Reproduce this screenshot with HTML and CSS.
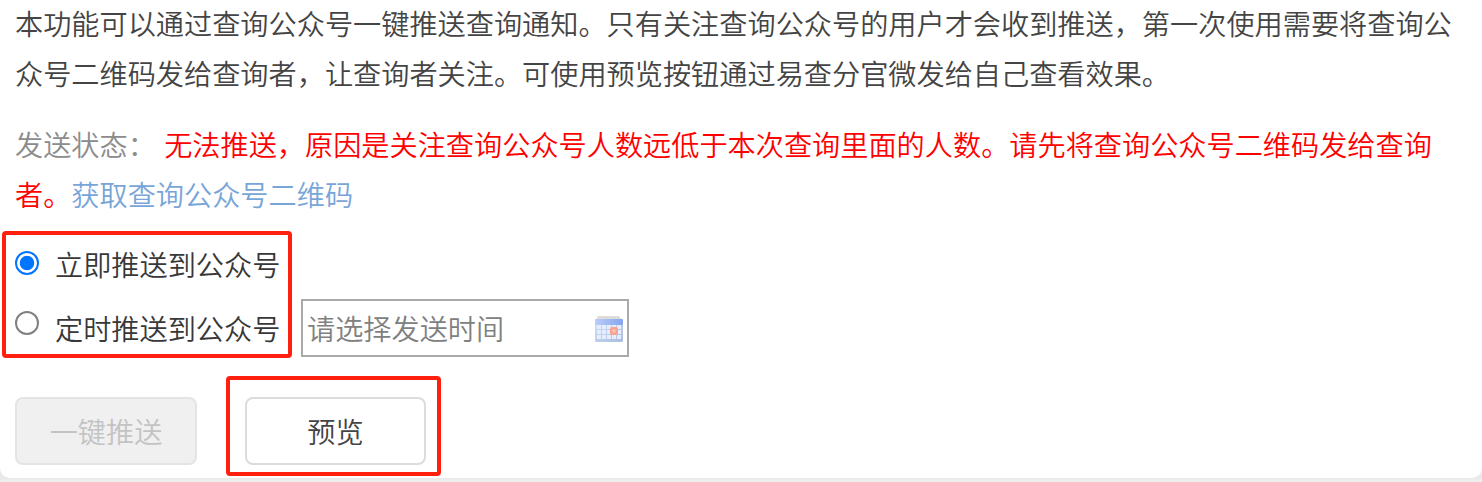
FILE: index.html
```html
<!DOCTYPE html>
<html lang="zh-CN">
<head>
    <meta charset="UTF-8">
    <meta name="viewport" content="width=device-width, initial-scale=1.0">
    <title>推送查询通知</title>
    <link rel="stylesheet" href="styles.css">
</head>
<body>

<div class="panel">
    <p class="intro">本功能可以通过查询公众号一键推送查询通知。只有关注查询公众号的用户才会收到推送，第一次使用需要将查询公众号二维码发给查询者，让查询者关注。可使用预览按钮通过易查分官微发给自己查看效果。</p>
    <p class="status"><span class="status-label">发送状态：</span> <span class="error">无法推送，原因是关注查询公众号人数远低于本次查询里面的人数。请先将查询公众号二维码发给查询者。</span><a class="link">获取查询公众号二维码</a></p>

    <div class="options">
        <label class="option">
            <input type="radio" name="pushType" class="radio" checked>
            <span>立即推送到公众号</span>
        </label>
        <div class="option-row">
            <label class="option option-timed">
                <input type="radio" name="pushType" class="radio">
                <span>定时推送到公众号</span>
            </label>
            <div class="date-input">
                <span>请选择发送时间</span>
                <svg class="calendar" width="28" height="27" viewBox="0 0 28 27">
                    <defs>
                        <linearGradient id="calHead" x1="0" y1="0" x2="1" y2="0">
                            <stop offset="0" stop-color="#b9cdf8"/>
                            <stop offset="1" stop-color="#86a5ee"/>
                        </linearGradient>
                        <linearGradient id="calBody" x1="0" y1="0" x2="1" y2="1">
                            <stop offset="0" stop-color="#d3e1fa"/>
                            <stop offset="1" stop-color="#a9bddc"/>
                        </linearGradient>
                    </defs>
                    <path d="M3 1H24L27 5H1Z" fill="#dfdcd8"/>
                    <rect x="0" y="4" width="28" height="23" rx="1.5" fill="url(#calBody)"/>
                    <rect x="0" y="4" width="28" height="6" rx="1" fill="url(#calHead)"/>
                    <path d="M2 10h4v4h-4zM7 10h4v4h-4zM12 10h4v4h-4zM17 10h4v4h-4zM22 10h4v4h-4zM2 15h4v4h-4zM7 15h4v4h-4zM12 15h4v4h-4zM22 15h4v4h-4zM2 20h4v4h-4zM7 20h4v4h-4zM12 20h4v4h-4zM17 20h4v4h-4zM22 20h4v4h-4z" fill="#e6eefd"/>
                    <rect x="15" y="12" width="8" height="8" rx="2" fill="#f6a48f"/>
                    <rect x="17.5" y="14.5" width="3" height="3" fill="#fbc5b5"/>
                </svg>
            </div>
        </div>
        <div class="mark mark-options"></div>
    </div>

    <div class="buttons">
        <button type="button" class="btn" disabled>一键推送</button>
        <div class="preview">
            <button type="button" class="btn">预览</button>
            <div class="mark mark-preview"></div>
        </div>
    </div>
</div>

</body>
</html>
```
FILE: styles.css
```css
* {
    box-sizing: border-box;
}
body {
    margin: 0;
    height: 482px;
    overflow: hidden;
    background: linear-gradient(#e9e9e9 478px, #f0f0f0 482px);
    color: #444;
    font-family: "Noto Sans CJK SC", sans-serif;
    font-size: 28.18px;
    font-weight: 350;
    line-height: 50px;
}
.panel {
    display: flow-root;
    height: 478px;
    padding: 0 15px;
    background-color: #fff;
    border-radius: 0 0 10px 10px;
}
p {
    margin: 0;
}
.intro {
    height: 121px;
    margin-top: -2px;
}
.status {
    height: 112px;
}
.status-label {
    margin-right: 2px;
    color: #8c8c8c;
}
.error {
    color: #f00;
}
.link {
    color: #78a5d8;
}
.options {
    position: relative;
    height: 127px;
    padding-top: 8px;
}
.option {
    display: flex;
    color: #383838;
}
.option-row {
    display: flex;
    align-items: flex-start;
    margin-top: 10px;
}
.option-timed {
    width: 286px;
    padding-top: 4px;
}
.radio {
    appearance: none;
    width: 24px;
    height: 24px;
    margin: 12px 16px 0 0;
    border: 2px solid #808080;
    border-radius: 50%;
    background-color: #fff;
}
.radio:checked {
    border-color: #0075ff;
    background: radial-gradient(circle, #0075ff 6.8px, #fff 7.6px);
}
.option-timed .radio {
    margin-top: 8px;
}
.date-input {
    display: flex;
    align-items: center;
    justify-content: space-between;
    width: 328px;
    height: 58px;
    padding: 0 4px;
    border: 2px solid #a9a9a9;
    color: #808080;
}
.buttons {
    display: flex;
    gap: 48px;
    padding-top: 39px;
}
.preview {
    position: relative;
}
.btn {
    display: block;
    width: 182px;
    height: 68px;
    padding: 0 0 2px;
    border: 2px solid #dcdcdc;
    border-radius: 8px;
    background-color: #fff;
    color: #444;
    font-family: inherit;
    font-size: inherit;
    font-weight: inherit;
}
.preview .btn {
    width: 181px;
}
.btn:disabled {
    border-color: #e4e4e4;
    background-color: #f0f0f0;
    color: #c3c3c3;
}
/* red highlight frames */
.mark {
    position: absolute;
    border: 4px solid #ff2010;
    border-radius: 4px;
    pointer-events: none;
}
.mark-options {
    left: -13px;
    top: 0;
    width: 290px;
    height: 127px;
}
.mark-preview {
    left: -19px;
    top: -21px;
    width: 215px;
    height: 100px;
}
```
